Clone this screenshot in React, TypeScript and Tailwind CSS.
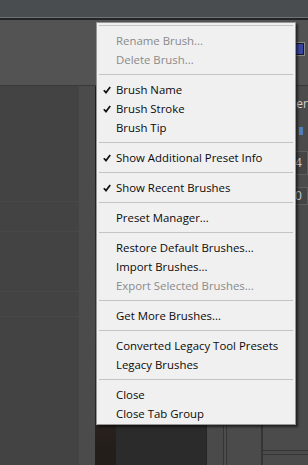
import React from 'react';

type Entry =
  | { kind: 'sep' }
  | { kind: 'item'; label: string; checked?: boolean; disabled?: boolean };

const MENU: Entry[] = [
  { kind: 'item', label: 'Rename Brush...', disabled: true },
  { kind: 'item', label: 'Delete Brush...', disabled: true },
  { kind: 'sep' },
  { kind: 'item', label: 'Brush Name', checked: true },
  { kind: 'item', label: 'Brush Stroke', checked: true },
  { kind: 'item', label: 'Brush Tip' },
  { kind: 'sep' },
  { kind: 'item', label: 'Show Additional Preset Info', checked: true },
  { kind: 'sep' },
  { kind: 'item', label: 'Show Recent Brushes', checked: true },
  { kind: 'sep' },
  { kind: 'item', label: 'Preset Manager...' },
  { kind: 'sep' },
  { kind: 'item', label: 'Restore Default Brushes...' },
  { kind: 'item', label: 'Import Brushes...' },
  { kind: 'item', label: 'Export Selected Brushes...', disabled: true },
  { kind: 'sep' },
  { kind: 'item', label: 'Get More Brushes...' },
  { kind: 'sep' },
  { kind: 'item', label: 'Converted Legacy Tool Presets' },
  { kind: 'item', label: 'Legacy Brushes' },
  { kind: 'sep' },
  { kind: 'item', label: 'Close' },
  { kind: 'item', label: 'Close Tab Group' },
];

const Check = () => (
  <svg width="8" height="8" viewBox="0 0 8 8" className="block">
    <path d="M0.8 4.2 L3 6.6 L7.2 1" fill="none" stroke="#111" strokeWidth="1.7" strokeLinejoin="miter" />
  </svg>
);

const FlyoutMenu: React.FC = () => (
  <div className="absolute left-[96px] top-[22px] w-[200px] bg-[#f0f0f0] border border-[#979797] shadow-[2px_2px_2px_rgba(0,0,0,0.55)] pb-[1px]">
    <div className="h-[8px] pt-[2px] px-[2px]">
      <div className="h-[1px] bg-[#c4c4c4]" />
    </div>
    {MENU.map((entry, i) =>
      entry.kind === 'sep' ? (
        <div key={i} className="h-[11px] pt-[5px] px-[2px]">
          <div className="h-[1px] bg-[#c4c4c4]" />
        </div>
      ) : (
        <div
          key={i}
          className={`h-[19px] flex items-center text-[11.4px] leading-[19px] whitespace-nowrap ${
            entry.disabled ? 'text-[#8a8a8a]' : 'text-[#0a0a0a]'
          }`}
        >
          <div className="w-[19px] shrink-0 flex justify-start pl-[6px]">{entry.checked && <Check />}</div>
          <span>{entry.label}</span>
        </div>
      )
    )}
  </div>
);

const App: React.FC = () => {
  return (
    <div
      className="relative w-[308px] h-[465px] overflow-hidden bg-[#4b4b4b] flex flex-col"
      style={{ fontFamily: '"Open Sans", "Noto Sans", "Liberation Sans", sans-serif' }}
    >
      {/* top app bar */}
      <div className="h-[17px] bg-[#4a4d50]" />
      <div className="h-[1px] bg-[#707376]" />
      <div className="h-[2px] bg-[#242424]" />

      {/* upper strip */}
      <div className="h-[65px] bg-[#535353] flex justify-end items-start">
        <div className="mt-[23px] mr-[4px] w-[11px] h-[12px] bg-[#3a46a0] border border-[#1b1b1b] ring-1 ring-[#8a8a8a]" />
      </div>
      <div className="h-[1px] bg-[#3a3a3a]" />

      {/* lower area */}
      <div className="flex-1 flex">
        <div className="w-[80px] bg-[#434343] flex flex-col">
          <div className="h-[116px] border-b border-[#484848]" />
          <div className="h-[30px] border-b border-[#484848]" />
          <div className="h-[60px] border-b border-[#484848]" />
          <div className="h-[25px] border-b border-[#484848]" />
        </div>
        <div className="w-[16px] bg-[#4b4b4b]" />
        <div className="w-[22px] bg-[#2e2826] bg-[radial-gradient(circle_at_30%_60%,#3d322c_0,#241e1b_60%)]" />
        <div className="w-[91px] bg-[#2b2b2b]" />
        <div className="w-[1px] bg-[#262626]" />
        <div className="w-[16px] bg-[#4a4a4a]" />
        <div className="w-[1px] bg-[#353535]" />
        <div className="w-[2px] bg-[#4d4d4d]" />
        <div className="w-[1px] bg-[#353535]" />
        <div className="w-[35px] bg-[#4b4b4b]" />
        <div className="w-[2px] bg-[#353535]" />
        <div className="flex-1 bg-[#4b4b4b] flex flex-col">
          <div className="h-[25px] pl-[26px] flex items-end text-[12px] leading-[14px] text-[#d6d6d6] whitespace-nowrap">
            per
          </div>
          <div className="mt-[9px] h-[22px] flex items-center">
            <div className="ml-[20px] w-[9px] h-[22px] border border-[#8a8a8a] bg-[#3b3b3b]" />
            <div className="ml-[7px] w-[4px] h-[8px] bg-[#4f7fb5]" />
          </div>
          <div className="mt-[9px] ml-[27px] h-[24px] border border-[#5e5e5e] bg-[#454545] text-[12px] leading-[22px] text-[#c9d2dc] pl-[4px]">
            4
          </div>
          <div className="mt-[12px] ml-[27px] h-[18px] border border-[#5e5e5e] bg-[#454545] text-[12px] leading-[16px] text-[#c9d2dc] pl-[4px]">
            0
          </div>
          <div className="flex-1" />
          <div className="h-[1px] bg-[#353535] mb-[3px]" />
          <div className="h-[1px] bg-[#353535] mb-[10px]" />
        </div>
      </div>

      <FlyoutMenu />
    </div>
  );
};

export default App;
